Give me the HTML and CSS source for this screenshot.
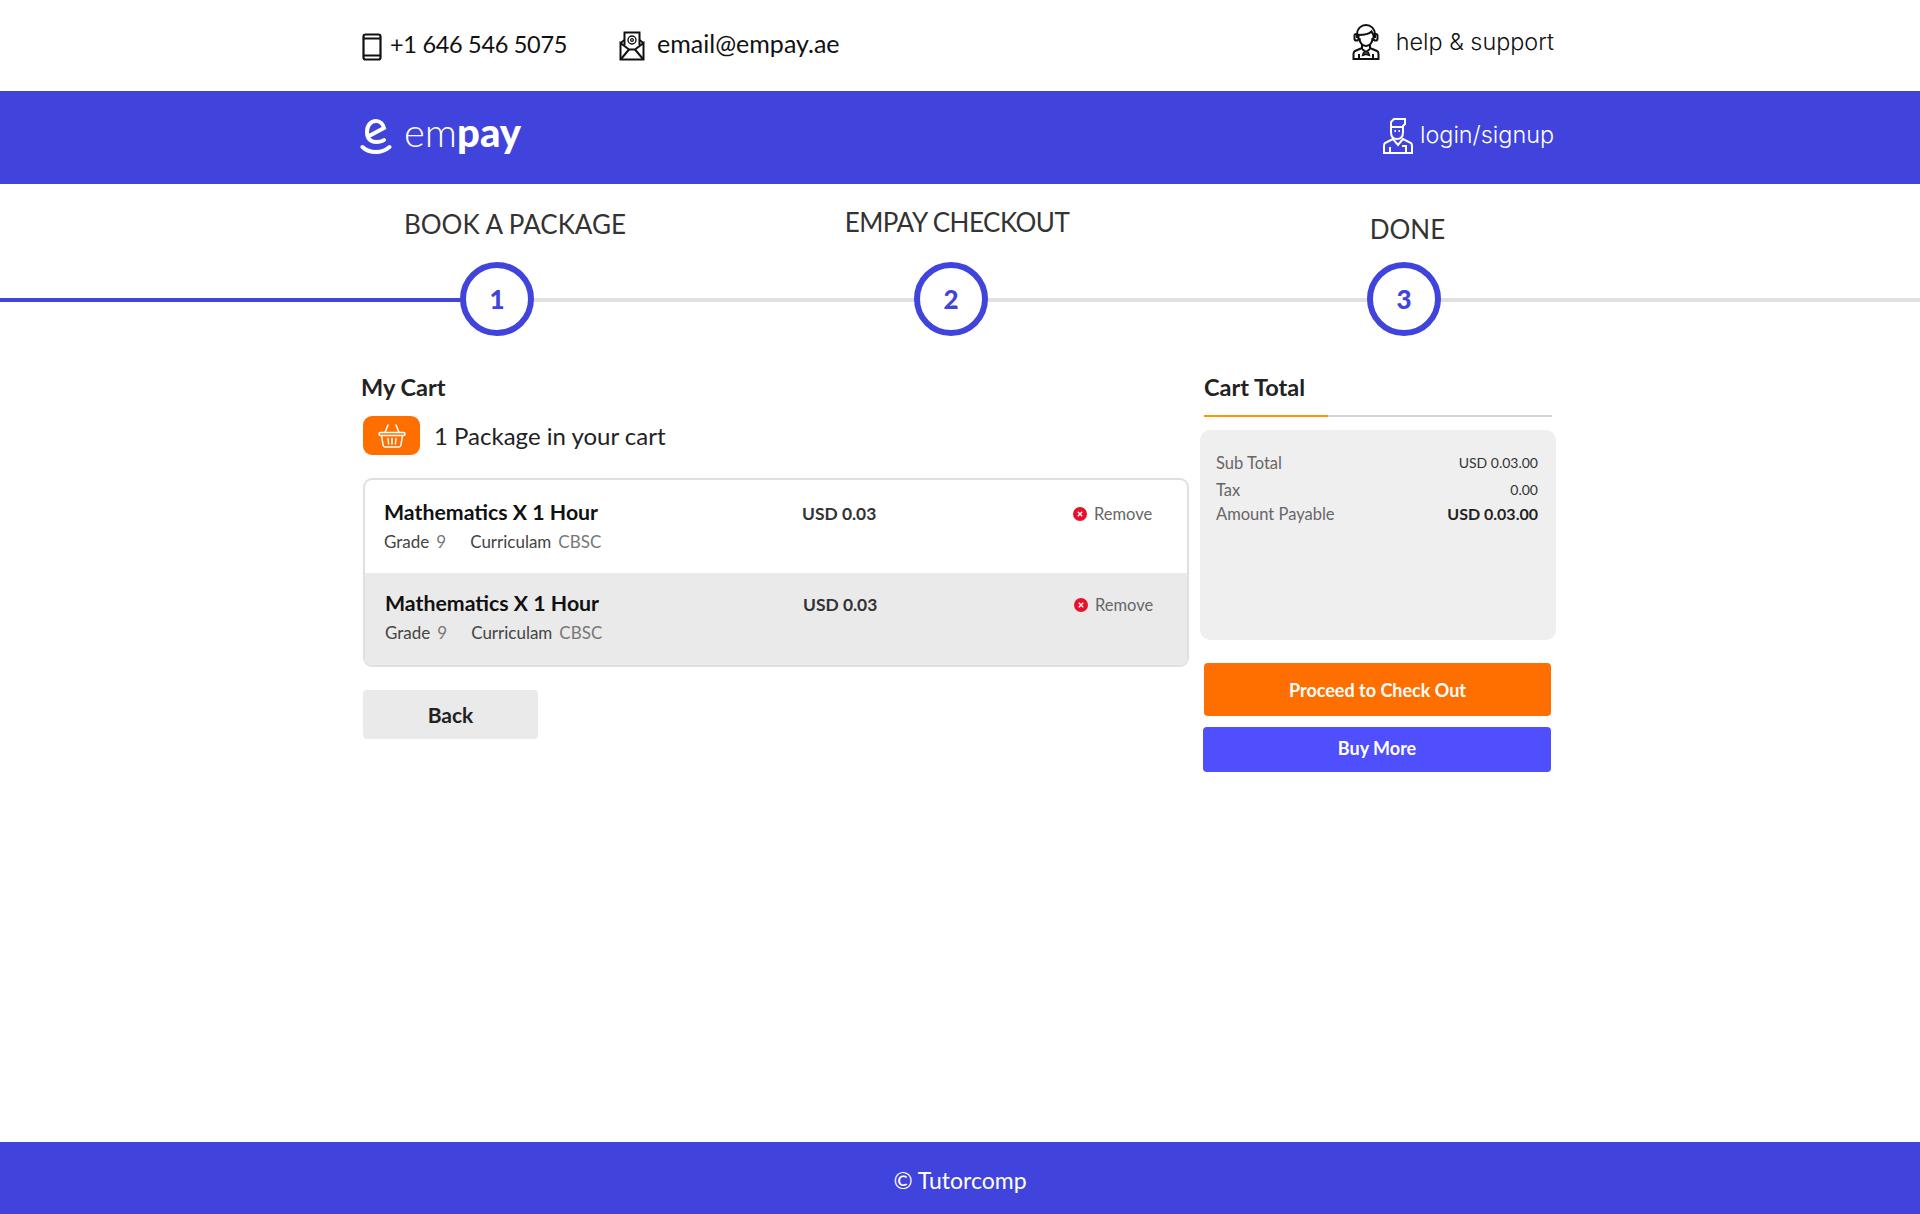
FILE: index.html
```html
<!DOCTYPE html>
<html lang="en">
<head>
  <meta charset="UTF-8">
  <meta name="viewport" content="width=device-width, initial-scale=1.0">
  <title>Empay - My Cart</title>
  <link rel="stylesheet" href="styles.css">
</head>
<body>
  <div class="topbar">
    <div class="wrap topbar-inner">
      <div class="contact contact-phone">
        <svg class="ico-phone" viewBox="0 0 20 28" fill="none" stroke="#111" stroke-width="2.200"><rect x="1.500" y="1.500" width="17" height="25" rx="2"/><path d="M1.500 5.500h17M1.500 22.500h17"/></svg>
        <span>+1 646 546 5075</span>
      </div>
      <div class="contact contact-mail">
        <svg class="ico-mail" viewBox="0 0 26 30" fill="none" stroke="#111" stroke-width="2"><path d="M5.500 14V1.500h15V14"/><path d="M1.500 12 5.500 9M24.500 12 20.500 9"/><path d="M1.500 12v16.500h23V12L16 18.500H10z"/><path d="M2 28 10 18.500M24 28 16 18.500"/><circle cx="13" cy="9" r="4" stroke-width="1.400"/><circle cx="13" cy="9" r="1.400" stroke-width="1.200"/></svg>
        <span>email@empay.ae</span>
      </div>
      <div class="contact contact-help">
        <svg class="ico-help" viewBox="0 0 28 36" fill="none" stroke="#111" stroke-width="2"><path d="M5 14V10a9 9 0 0 1 18 0v4"/><rect x="2.500" y="10" width="4" height="6.500" rx="1.800"/><rect x="21.500" y="10" width="4" height="6.500" rx="1.800"/><path d="M6.500 11c5 0 10-.5 13-3.500l2 3.500"/><path d="M7.500 14c0 5 3 8 6.500 8s6.500-3 6.500-8"/><path d="M10 21v3l-7 3c-1 .5-1.500 1.500-1.500 3v5h25v-5c0-1.500-.5-2.500-1.500-3l-7-3v-3"/><path d="M10 25l4 3 4-3M12 28l-1 3 3-1 3 1-1-3M7 35v-5M21 35v-5"/></svg>
        <span>help &amp; support</span>
      </div>
    </div>
  </div>

  <header class="header">
    <div class="wrap header-inner">
      <a class="logo" href="#">
        <svg class="logo-mark" viewBox="0 0 32 35" fill="none" stroke="#fff" stroke-width="4" stroke-linecap="round"><path d="M9 17 24 9c-1-4-4-7-8-7-5 0-9 4-9 11 0 6 3 10 9 10 3 0 6-.5 8-2"/><path d="M2.500 28c3 3 8 5 13.500 5s10-2 13.500-5"/></svg>
        <span class="logo-text">em<b>pay</b></span>
      </a>
      <a class="login" href="#">
        <svg class="ico-user" viewBox="0 0 30 36" fill="none" stroke="#fff" stroke-width="2"><path d="M8 13V4l3-3h11v5l-2 2v6c0 4-2 7-6 7s-6-3-6-7z"/><path d="M8 9h12"/><path d="M11.500 13h1.500M15.500 13H17" stroke-width="2.200"/><path d="M10 21 2 25c-1 1-1 2-1 3v7h28v-7c0-1 0-2-1-3l-8-4-5 6z"/><path d="M7 35v-6M23 35v-6M19 28h5"/></svg>
        <span>login/signup</span>
      </a>
    </div>
  </header>

  <div class="steps">
    <div class="track"><span class="track-done"></span></div>
    <div class="step step-one">
      <div class="step-label">BOOK A PACKAGE</div>
      <div class="step-num">1</div>
    </div>
    <div class="step step-two">
      <div class="step-label">EMPAY CHECKOUT</div>
      <div class="step-num">2</div>
    </div>
    <div class="step step-three">
      <div class="step-label">DONE</div>
      <div class="step-num">3</div>
    </div>
  </div>

  <main class="wrap content">
    <section class="cart">
      <h3 class="cart-title">My Cart</h3>
      <div class="cart-count">
        <span class="basket">
          <svg viewBox="0 0 28 24" fill="none" stroke="#fff" stroke-width="1.500" stroke-linecap="round"><rect x="1" y="8.500" width="26" height="3" rx="1.500"/><path d="M3.500 11.500 5 20.500c.2 1.500 1 2.500 2.500 2.500h13c1.500 0 2.300-1 2.500-2.500l1.500-9"/><path d="M7 8.500 10 1M21 8.500 18 1M10 14.500l.6 5.500M14 14.500V20M18 14.500l-.6 5.500"/></svg>
        </span>
        <span>1 Package in your cart</span>
      </div>
      <div class="items">
        <div class="item">
          <div class="item-info">
            <div class="item-name">Mathematics X 1 Hour</div>
            <div class="item-meta"><span>Grade</span><em>9</em><span class="meta-gap">Curriculam</span><em>CBSC</em></div>
          </div>
          <div class="item-price">USD 0.03</div>
          <a class="remove" href="#"><svg viewBox="0 0 14 14"><circle cx="7" cy="7" r="7" fill="#e8112d"/><path d="M4.800 4.800l4.400 4.400M9.200 4.800l-4.400 4.400" stroke="#fff" stroke-width="1.300"/></svg>Remove</a>
        </div>
        <div class="item item-alt">
          <div class="item-info">
            <div class="item-name">Mathematics X 1 Hour</div>
            <div class="item-meta"><span>Grade</span><em>9</em><span class="meta-gap">Curriculam</span><em>CBSC</em></div>
          </div>
          <div class="item-price">USD 0.03</div>
          <a class="remove" href="#"><svg viewBox="0 0 14 14"><circle cx="7" cy="7" r="7" fill="#e8112d"/><path d="M4.800 4.800l4.400 4.400M9.200 4.800l-4.400 4.400" stroke="#fff" stroke-width="1.300"/></svg>Remove</a>
        </div>
      </div>
      <button class="btn-back" type="button">Back</button>
    </section>

    <aside class="summary">
      <h3 class="summary-title">Cart Total</h3>
      <div class="summary-box">
        <div class="summary-row"><span>Sub Total</span><span class="val">USD 0.03.00</span></div>
        <div class="summary-row row-tax"><span>Tax</span><span class="val">0.00</span></div>
        <div class="summary-row row-pay"><span>Amount Payable</span><span class="val val-strong">USD 0.03.00</span></div>
      </div>
      <button class="btn btn-orange" type="button">Proceed to Check Out</button>
      <button class="btn btn-blue" type="button">Buy More</button>
    </aside>
  </main>

  <footer class="footer">© Tutorcomp</footer>
</body>
</html>
```

FILE: styles.css
```css
* {
  box-sizing: border-box;
}
body {
  font-family: Lato, "Open Sans", sans-serif;
  background-color: white;
  color: #111;
  margin: 0;
  min-height: 1214px;
  display: flex;
  flex-direction: column;
}
a {
  color: inherit;
  text-decoration: none;
}
.wrap {
  width: 1196px;
  margin-left: 360px;
}

.topbar {
  height: 91px;
}
.topbar-inner {
  display: flex;
  align-items: center;
  height: 100%;
  padding-right: 2px;
}
.contact {
  display: flex;
  align-items: center;
  font-size: 25px;
  line-height: 30px;
}
.contact-phone {
  padding-left: 2px;
  font-size: 23.500px;
  letter-spacing: -0.300px;
}
.contact-phone span {
  margin-top: -4px;
}
.ico-phone {
  width: 20px;
  height: 28px;
  margin-right: 8px;
  margin-top: 2px;
}
.contact-mail {
  margin-left: 52px;
}
.contact-mail span {
  margin-top: -5px;
}
.ico-mail {
  width: 26px;
  height: 30px;
  margin-right: 12px;
  margin-top: 1px;
}
.contact-help {
  margin-left: auto;
  margin-top: -8px;
  font-family: Inter, sans-serif;
  font-weight: 300;
  font-size: 23.400px;
}
.ico-help {
  width: 28px;
  height: 36px;
  margin-right: 16px;
}

.header {
  height: 93px;
  background-color: #4044dc;
  color: white;
}
.header-inner {
  display: flex;
  align-items: center;
  justify-content: space-between;
  height: 100%;
  padding-right: 2px;
}
.logo {
  display: flex;
  align-items: center;
  margin-top: -3px;
}
.logo-mark {
  width: 32px;
  height: 35px;
  margin-right: 12px;
}
.logo-text {
  font-size: 40px;
  font-weight: 300;
  line-height: 1;
  margin-top: -8px;
}
.logo-text b {
  font-weight: 900;
}
.login {
  display: flex;
  align-items: center;
  font-family: Inter, sans-serif;
  font-weight: 300;
  font-size: 23.400px;
  margin-top: -6px;
}
.ico-user {
  width: 30px;
  height: 36px;
  margin-right: 7px;
  margin-top: 2px;
}

.steps {
  position: relative;
  height: 152px;
  display: flex;
  color: #333;
}
.track {
  position: absolute;
  left: 0;
  right: 0;
  top: 114px;
  height: 4px;
  background-color: #e0e0e0;
}
.track-done {
  display: block;
  width: 462px;
  height: 100%;
  background-color: #4044dc;
}
.step {
  position: relative;
  width: 454px;
}
.step-one {
  margin-left: 270px;
}
.step-three {
  margin-left: -1px;
}
.step-label {
  height: 78px;
  font-size: 26px;
  text-align: center;
  white-space: nowrap;
}
.step-one .step-label {
  padding: 24px 0 0 16px;
  margin-left: 20px;
}
.step-two .step-label {
  padding: 22px 0 0 12px;
  letter-spacing: -0.500px;
}
.step-three .step-label {
  padding: 29px 0 0 7px;
}
.step-num {
  width: 74px;
  height: 74px;
  margin: 0 auto;
  border: 6px solid #4044dc;
  border-radius: 50%;
  background-color: white;
  color: #4044dc;
  font-size: 26px;
  font-weight: 900;
  display: flex;
  align-items: center;
  justify-content: center;
}

.content {
  flex: 1;
  display: flex;
  padding-top: 36px;
}
.cart {
  flex: none;
  width: 830px;
}
.cart-title {
  margin: 0 0 0 1px;
  font-size: 23.500px;
  font-weight: 700;
  color: #222;
  line-height: 30px;
}
.cart-count {
  display: flex;
  align-items: center;
  margin: 14px 0 0 3px;
  font-size: 24px;
  color: #222;
}
.basket {
  width: 57px;
  height: 39px;
  background-color: #ff6f00;
  border-radius: 9px;
  margin-right: 14px;
  display: flex;
  align-items: center;
  justify-content: center;
}
.basket svg {
  width: 28px;
  height: 24px;
}
.items {
  margin: 23px 0 0 3px;
  width: 826px;
  height: 189px;
  border: 2px solid #e0e0e0;
  border-radius: 9px;
  overflow: hidden;
}
.item {
  height: 93px;
  display: flex;
  align-items: flex-start;
  padding: 18px 0 0 19px;
}
.item-alt {
  height: 92px;
  background-color: #eaeaea;
  padding: 16px 0 0 20px;
}
.item-info {
  width: 418px;
}
.item-name {
  font-size: 21.300px;
  font-weight: 700;
  line-height: 28px;
}
.item-meta {
  display: flex;
  margin-top: 5px;
  font-size: 17px;
  line-height: 22px;
  color: #444;
}
.item-meta em {
  font-style: normal;
  color: #777;
  margin-left: 7px;
}
.meta-gap {
  margin-left: 24px;
}
.item-price {
  width: 271px;
  font-size: 17.400px;
  font-weight: 700;
  color: #333;
  line-height: 28px;
  margin-top: 2px;
}
.remove {
  display: flex;
  align-items: center;
  font-size: 16.500px;
  color: #666;
  line-height: 28px;
  margin-top: 2px;
}
.remove svg {
  width: 14px;
  height: 14px;
  margin-right: 7px;
}
.btn-back {
  display: block;
  margin: 23px 0 0 3px;
  width: 175px;
  height: 49px;
  background-color: #eaeaea;
  border: none;
  border-radius: 4px;
  font-family: inherit;
  font-size: 21px;
  font-weight: 700;
  color: #222;
}

.summary {
  flex: none;
  width: 356px;
  margin-left: 10px;
}
.summary-title {
  margin: 0 0 0 4px;
  padding-bottom: 13px;
  width: 348px;
  font-size: 23.500px;
  font-weight: 700;
  color: #222;
  line-height: 30px;
  position: relative;
  border-bottom: 2px solid #d4d4d4;
}
.summary-title::after {
  content: "";
  position: absolute;
  left: 0;
  bottom: -2px;
  width: 124px;
  height: 2px;
  background-color: #ff9800;
}
.summary-box {
  margin-top: 13px;
  height: 210px;
  width: 356px;
  background-color: #f0eff0;
  border-radius: 10px;
  padding: 22px 18px 0 16px;
  font-size: 16.500px;
  color: #666;
}
.summary-row {
  display: flex;
  justify-content: space-between;
  line-height: 22px;
}
.row-tax {
  margin-top: 5px;
}
.row-pay {
  margin-top: 2px;
}
.val {
  font-size: 14px;
  color: #333;
}
.val-strong {
  font-size: 16px;
  font-weight: 700;
  color: #222;
}
.btn {
  display: block;
  border: none;
  border-radius: 4px;
  color: white;
  font-family: inherit;
  font-size: 18px;
  font-weight: 700;
}
.btn-orange {
  margin: 23px 0 0 4px;
  width: 347px;
  height: 53px;
  background-color: #ff6f00;
}
.btn-blue {
  margin: 11px 0 0 3px;
  width: 348px;
  height: 45px;
  padding-bottom: 4px;
  background-color: #4f4ffd;
}

.footer {
  height: 72px;
  padding-top: 4px;
  background-color: #4044dc;
  color: white;
  font-size: 23px;
  display: flex;
  align-items: center;
  justify-content: center;
}
```
